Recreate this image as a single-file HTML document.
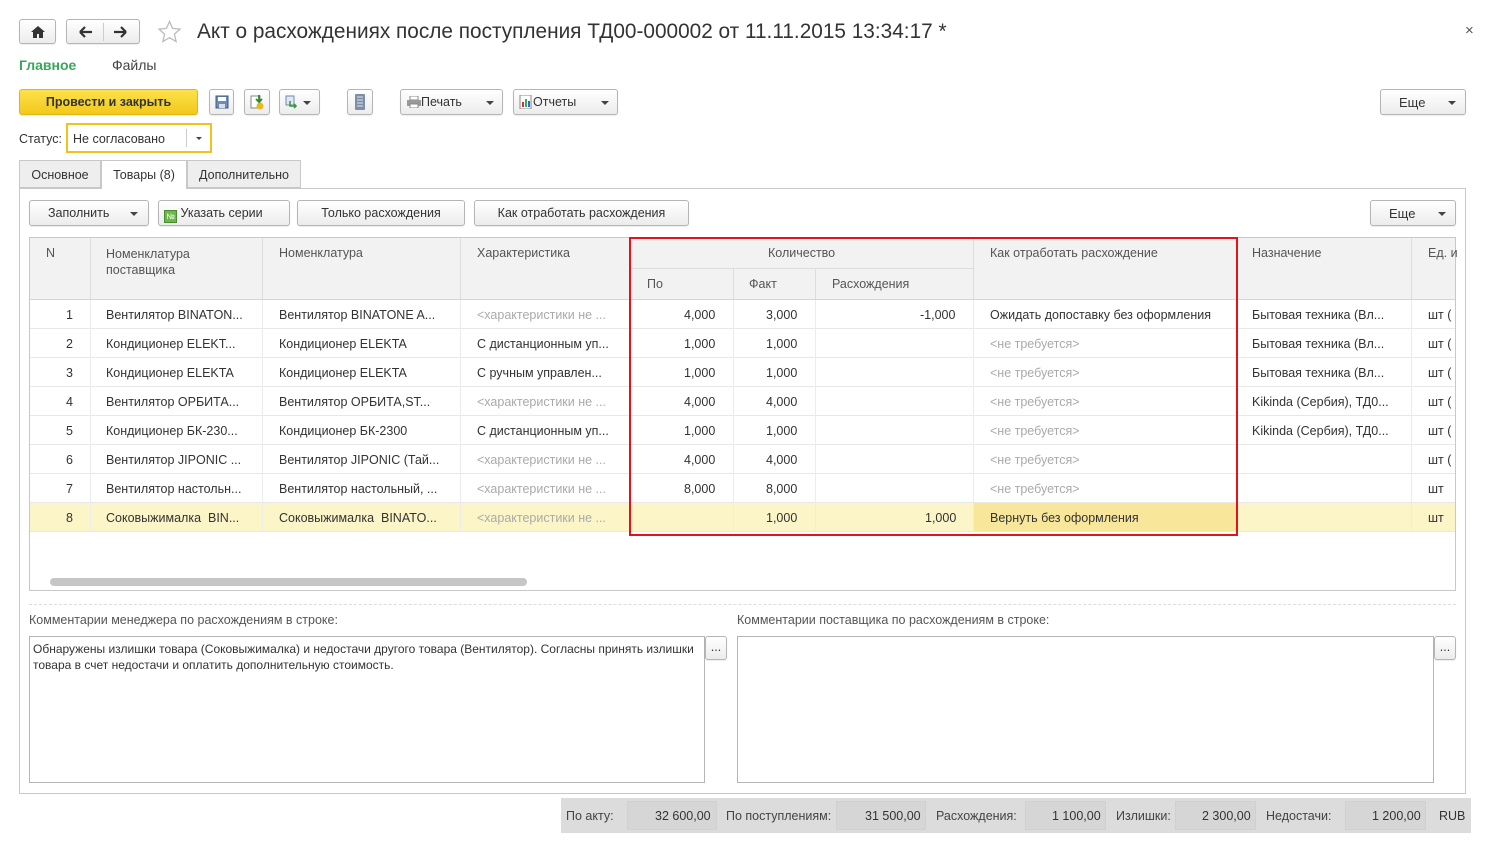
<!DOCTYPE html>
<html><head><meta charset="utf-8">
<style>
*{box-sizing:border-box;margin:0;padding:0}
body{width:1492px;height:842px;background:#fff;font-family:"Liberation Sans",Arial,sans-serif;font-size:12.5px;color:#333;position:relative;overflow:hidden}
.a{position:absolute;white-space:nowrap}
.btn{position:absolute;border:1px solid #b5b5b5;border-radius:3px;background:linear-gradient(#fff,#ececec);height:26px;line-height:25px;text-align:center;color:#333;box-shadow:0 1px 1px rgba(0,0,0,.08)}
.dd{position:absolute;width:0;height:0;border-left:4px solid transparent;border-right:4px solid transparent;border-top:4px solid #444}
.hl{position:absolute;background:#ddd}
.grey{color:#aaa}
</style></head><body>
<div class="btn" style="left:19px;top:19px;width:37px;height:25px"><svg width="14" height="12" viewBox="0 0 14 12" style="margin-top:6px"><path d="M7 0L0 6h2v6h4V8h2v4h4V6h2z" fill="#333"/></svg></div>
<div class="btn" style="left:66px;top:19px;width:74px;height:25px"><span style="position:absolute;left:36px;top:3px;height:18px;border-left:1px solid #ccc"></span><svg width="70" height="14" style="position:absolute;left:2px;top:5px"><path d="M11 7h12M11 7l5-5M11 7l5 5" stroke="#333" stroke-width="2.2" fill="none"/><path d="M57 7H45M57 7l-5-5M57 7l-5 5" stroke="#333" stroke-width="2.2" fill="none"/></svg></div>
<svg class="a" style="left:157px;top:20px" width="25" height="24" viewBox="0 0 24 24"><path d="M12 1.5l3.1 6.9 7.4.7-5.6 5 1.7 7.4L12 17.6l-6.6 3.9 1.7-7.4-5.6-5 7.4-.7z" fill="none" stroke="#bbb" stroke-width="1.3"/></svg>
<div class="a" style="left:197px;top:20px;font-size:20.8px;color:#333">Акт о расхождениях после поступления ТД00-000002 от 11.11.2015 13:34:17 *</div>
<div class="a" style="left:1465px;top:22px;font-size:15px;color:#555">×</div>
<div class="a" style="left:19px;top:57px;font-size:14px;color:#3aa55c;font-weight:bold">Главное</div>
<div class="a" style="left:112px;top:57px;font-size:14px;color:#444">Файлы</div>
<div class="btn" style="left:19px;top:89px;width:179px;background:linear-gradient(#fce24a,#f3c81c);border-color:#e0b810;font-weight:bold;color:#333">Провести и закрыть</div>
<div class="btn" style="left:209px;top:89px;width:25px"><svg width="14" height="14" style="margin-top:5px"><rect x="1" y="1" width="12" height="12" fill="#6d8db8" stroke="#3b5b88"/><rect x="3" y="2" width="8" height="4" fill="#fff"/><rect x="4" y="9" width="6" height="4" fill="#ddd"/></svg></div>
<div class="btn" style="left:244px;top:89px;width:26px"><svg width="16" height="16" style="margin-top:4px"><rect x="2" y="2" width="9" height="12" fill="#fff" stroke="#888"/><circle cx="11" cy="12" r="3.5" fill="#e8b81c"/><path d="M10 1v6M7 5l3 3 3-3" stroke="#2a8a2a" stroke-width="1.8" fill="none"/></svg></div>
<div class="btn" style="left:279px;top:89px;width:41px"><svg width="14" height="14" style="position:absolute;left:5px;top:5px"><rect x="1" y="1" width="8" height="9" fill="#dfe8f3" stroke="#6b8ab4"/><path d="M5 6v5h6M9 9l2 2-2 2" stroke="#3a9a3a" stroke-width="1.6" fill="none"/></svg><span class="dd" style="left:23px;top:11px"></span></div>
<div class="btn" style="left:347px;top:89px;width:26px"><svg width="10" height="16" style="margin-top:4px"><rect x="0" y="0" width="10" height="16" fill="#7e8ea8" rx="1"/><path d="M2 3h6M2 6h6M2 9h6M2 12h6" stroke="#dfe4ec"/></svg></div>
<div class="btn" style="left:400px;top:89px;width:103px;text-align:left;padding-left:6px"><svg width="14" height="12" style="vertical-align:-2px"><rect x="3" y="0" width="8" height="4" fill="#fff" stroke="#888"/><rect x="0" y="4" width="14" height="6" fill="#999"/><rect x="3" y="8" width="8" height="4" fill="#fff" stroke="#888"/></svg>Печать<span class="dd" style="left:85px;top:11px"></span></div>
<div class="btn" style="left:513px;top:89px;width:105px;text-align:left;padding-left:5px"><svg width="14" height="14" style="vertical-align:-3px"><rect x="1" y="0" width="11" height="14" fill="#fff" stroke="#888"/><rect x="3" y="7" width="2" height="5" fill="#c33"/><rect x="6" y="4" width="2" height="8" fill="#3a6"/><rect x="9" y="6" width="2" height="6" fill="#36c"/></svg>Отчеты<span class="dd" style="left:87px;top:11px"></span></div>
<div class="btn" style="left:1380px;top:89px;width:86px;text-align:left;padding-left:18px;font-size:13px">Еще<span class="dd" style="left:67px;top:11px"></span></div>
<div class="a" style="left:19px;top:132px">Статус:</div>
<div class="a" style="left:66px;top:123px;width:146px;height:30px;border:2px solid #f2c21b;background:#fff"><span style="position:absolute;left:5px;top:7px">Не согласовано</span><span style="position:absolute;left:118px;top:4px;height:18px;border-left:1px solid #ccc"></span><span class="dd" style="left:128px;top:12px;border-width:3px 3px 0;"></span></div>
<div class="a" style="left:19px;top:160px;width:82px;height:28px;border:1px solid #c8c8c8;background:#eee;line-height:28px;text-align:center">Основное</div>
<div class="a" style="left:101px;top:160px;width:86px;height:29px;border:1px solid #c8c8c8;border-bottom:none;background:#fff;line-height:28px;text-align:center;z-index:2">Товары (8)</div>
<div class="a" style="left:187px;top:160px;width:114px;height:28px;border:1px solid #c8c8c8;background:#eee;line-height:28px;text-align:center">Дополнительно</div>
<div class="a" style="left:19px;top:188px;width:1447px;height:606px;border:1px solid #c8c8c8"></div>
<div class="btn" style="left:29px;top:200px;width:120px;text-align:left;padding-left:18px">Заполнить<span class="dd" style="left:100px;top:11px"></span></div>
<div class="btn" style="left:158px;top:200px;width:132px;text-align:left;padding-left:5px"><span style="display:inline-block;width:13px;height:13px;background:#6bb84a;border:1px solid #4a8a30;color:#fff;font-size:8px;line-height:11px;text-align:center;vertical-align:-2px">№</span> Указать серии</div>
<div class="btn" style="left:297px;top:200px;width:168px">Только расхождения</div>
<div class="btn" style="left:474px;top:200px;width:215px">Как отработать расхождения</div>
<div class="btn" style="left:1370px;top:200px;width:86px;text-align:left;padding-left:18px;font-size:13px">Еще<span class="dd" style="left:67px;top:11px"></span></div>
<div class="a" style="left:29px;top:237px;width:1427px;height:354px;border:1px solid #c8c8c8;background:#fff;overflow:hidden">
 <div style="position:absolute;left:0;top:0;width:1427px;height:62px;background:#f2f2f2;border-bottom:1px solid #d5d5d5"></div>
</div>
<div class="hl" style="left:90px;top:238px;width:1px;height:61px"></div>
<div class="hl" style="left:262px;top:238px;width:1px;height:61px"></div>
<div class="hl" style="left:460px;top:238px;width:1px;height:61px"></div>
<div class="hl" style="left:733px;top:268px;width:1px;height:31px"></div>
<div class="hl" style="left:815px;top:268px;width:1px;height:31px"></div>
<div class="hl" style="left:973px;top:238px;width:1px;height:61px"></div>
<div class="hl" style="left:631px;top:268px;width:342px;height:1px"></div>
<div class="hl" style="left:1411px;top:238px;width:1px;height:61px"></div>
<div class="a" style="left:46px;top:246px;color:#555">N</div>
<div class="a" style="left:106px;top:246px;color:#555;line-height:16px">Номенклатура<br>поставщика</div>
<div class="a" style="left:279px;top:246px;color:#555">Номенклатура</div>
<div class="a" style="left:477px;top:246px;color:#555">Характеристика</div>
<div class="a" style="left:768px;top:246px;color:#555">Количество</div>
<div class="a" style="left:647px;top:277px;color:#555">По</div>
<div class="a" style="left:749px;top:277px;color:#555">Факт</div>
<div class="a" style="left:832px;top:277px;color:#555">Расхождения</div>
<div class="a" style="left:990px;top:246px;color:#555">Как отработать расхождение</div>
<div class="a" style="left:1252px;top:246px;color:#555">Назначение</div>
<div class="a" style="left:1428px;top:246px;color:#555">Ед. и</div>
<div class="a" style="left:30px;top:503px;width:1425px;height:29px;background:#fbf5c8"></div>
<div class="a" style="left:973px;top:503px;width:263px;height:29px;background:#f8e79a"></div>
<div class="a" style="left:30px;top:300px;width:1425px;height:233px;font-size:12.5px;color:#333">
<div style="position:relative;height:29px;border-bottom:1px solid #e8e8e8"><span class="a" style="left:36px;top:8px">1</span><span class="a" style="left:76px;top:8px">Вентилятор BINATON...</span><span class="a" style="left:249px;top:8px">Вентилятор BINATONE A...</span><span class="a grey" style="left:447px;top:8px">&lt;характеристики не ...</span><span class="a" style="left:654px;top:8px">4,000</span><span class="a" style="left:736px;top:8px">3,000</span><span class="a" style="left:890px;top:8px">-1,000</span><span class="a" style="left:960px;top:8px">Ожидать допоставку без оформления</span><span class="a" style="left:1222px;top:8px">Бытовая техника (Вл...</span><span class="a" style="left:1398px;top:8px">шт (</span></div>
<div style="position:relative;height:29px;border-bottom:1px solid #e8e8e8"><span class="a" style="left:36px;top:8px">2</span><span class="a" style="left:76px;top:8px">Кондиционер ELEKT...</span><span class="a" style="left:249px;top:8px">Кондиционер ELEKTA</span><span class="a" style="left:447px;top:8px">С дистанционным уп...</span><span class="a" style="left:654px;top:8px">1,000</span><span class="a" style="left:736px;top:8px">1,000</span><span class="a grey" style="left:960px;top:8px">&lt;не требуется&gt;</span><span class="a" style="left:1222px;top:8px">Бытовая техника (Вл...</span><span class="a" style="left:1398px;top:8px">шт (</span></div>
<div style="position:relative;height:29px;border-bottom:1px solid #e8e8e8"><span class="a" style="left:36px;top:8px">3</span><span class="a" style="left:76px;top:8px">Кондиционер ELEKTA</span><span class="a" style="left:249px;top:8px">Кондиционер ELEKTA</span><span class="a" style="left:447px;top:8px">С ручным управлен...</span><span class="a" style="left:654px;top:8px">1,000</span><span class="a" style="left:736px;top:8px">1,000</span><span class="a grey" style="left:960px;top:8px">&lt;не требуется&gt;</span><span class="a" style="left:1222px;top:8px">Бытовая техника (Вл...</span><span class="a" style="left:1398px;top:8px">шт (</span></div>
<div style="position:relative;height:29px;border-bottom:1px solid #e8e8e8"><span class="a" style="left:36px;top:8px">4</span><span class="a" style="left:76px;top:8px">Вентилятор ОРБИТА...</span><span class="a" style="left:249px;top:8px">Вентилятор ОРБИТА,ST...</span><span class="a grey" style="left:447px;top:8px">&lt;характеристики не ...</span><span class="a" style="left:654px;top:8px">4,000</span><span class="a" style="left:736px;top:8px">4,000</span><span class="a grey" style="left:960px;top:8px">&lt;не требуется&gt;</span><span class="a" style="left:1222px;top:8px">Kikinda (Сербия), ТД0...</span><span class="a" style="left:1398px;top:8px">шт (</span></div>
<div style="position:relative;height:29px;border-bottom:1px solid #e8e8e8"><span class="a" style="left:36px;top:8px">5</span><span class="a" style="left:76px;top:8px">Кондиционер БК-230...</span><span class="a" style="left:249px;top:8px">Кондиционер БК-2300</span><span class="a" style="left:447px;top:8px">С дистанционным уп...</span><span class="a" style="left:654px;top:8px">1,000</span><span class="a" style="left:736px;top:8px">1,000</span><span class="a grey" style="left:960px;top:8px">&lt;не требуется&gt;</span><span class="a" style="left:1222px;top:8px">Kikinda (Сербия), ТД0...</span><span class="a" style="left:1398px;top:8px">шт (</span></div>
<div style="position:relative;height:29px;border-bottom:1px solid #e8e8e8"><span class="a" style="left:36px;top:8px">6</span><span class="a" style="left:76px;top:8px">Вентилятор JIPONIC ...</span><span class="a" style="left:249px;top:8px">Вентилятор JIPONIC (Тай...</span><span class="a grey" style="left:447px;top:8px">&lt;характеристики не ...</span><span class="a" style="left:654px;top:8px">4,000</span><span class="a" style="left:736px;top:8px">4,000</span><span class="a grey" style="left:960px;top:8px">&lt;не требуется&gt;</span><span class="a" style="left:1398px;top:8px">шт (</span></div>
<div style="position:relative;height:29px;border-bottom:1px solid #e8e8e8"><span class="a" style="left:36px;top:8px">7</span><span class="a" style="left:76px;top:8px">Вентилятор настольн...</span><span class="a" style="left:249px;top:8px">Вентилятор настольный, ...</span><span class="a grey" style="left:447px;top:8px">&lt;характеристики не ...</span><span class="a" style="left:654px;top:8px">8,000</span><span class="a" style="left:736px;top:8px">8,000</span><span class="a grey" style="left:960px;top:8px">&lt;не требуется&gt;</span><span class="a" style="left:1398px;top:8px">шт</span></div>
<div style="position:relative;height:29px;border-bottom:1px solid #e8e8e8"><span class="a" style="left:36px;top:8px">8</span><span class="a" style="left:76px;top:8px">Соковыжималка&nbsp; BIN...</span><span class="a" style="left:249px;top:8px">Соковыжималка&nbsp; BINATO...</span><span class="a grey" style="left:447px;top:8px">&lt;характеристики не ...</span><span class="a" style="left:736px;top:8px">1,000</span><span class="a" style="left:895px;top:8px">1,000</span><span class="a" style="left:960px;top:8px">Вернуть без оформления</span><span class="a" style="left:1398px;top:8px">шт</span></div>
</div>
<div class="hl" style="left:90px;top:300px;width:1px;height:232px;background:#ececec"></div>
<div class="hl" style="left:262px;top:300px;width:1px;height:232px;background:#ececec"></div>
<div class="hl" style="left:460px;top:300px;width:1px;height:232px;background:#ececec"></div>
<div class="hl" style="left:733px;top:300px;width:1px;height:232px;background:#ececec"></div>
<div class="hl" style="left:815px;top:300px;width:1px;height:232px;background:#ececec"></div>
<div class="hl" style="left:973px;top:300px;width:1px;height:232px;background:#ececec"></div>
<div class="hl" style="left:1411px;top:300px;width:1px;height:232px;background:#ececec"></div>
<div class="a" style="left:629px;top:237px;width:609px;height:299px;border:2px solid #e0151b"></div>
<div class="a" style="left:50px;top:578px;width:477px;height:8px;background:#c6c6c6;border-radius:4px"></div>
<div class="a" style="left:29px;top:604px;width:1427px;border-top:1px dashed #ddd"></div>
<div class="a" style="left:29px;top:613px;color:#555">Комментарии менеджера по расхождениям в строке:</div>
<div class="a" style="left:737px;top:613px;color:#555">Комментарии поставщика по расхождениям в строке:</div>
<div class="a" style="left:29px;top:636px;width:676px;height:147px;border:1px solid #b5b5b5;padding:4px 3px;white-space:normal;font-size:12px;line-height:16px;color:#333">Обнаружены излишки товара (Соковыжималка) и недостачи другого товара (Вентилятор). Согласны принять излишки товара в счет недостачи и оплатить дополнительную стоимость.</div>
<div class="btn" style="left:705px;top:636px;width:22px;height:24px;line-height:20px">...</div>
<div class="a" style="left:737px;top:636px;width:697px;height:147px;border:1px solid #b5b5b5"></div>
<div class="btn" style="left:1434px;top:636px;width:22px;height:24px;line-height:20px">...</div>
<div class="a" style="left:561px;top:798px;width:910px;height:35px;background:#dcdcdc"></div>
<div class="a" style="left:627px;top:801px;width:90px;height:29px;background:#d6d6d6;border:1px solid #d0d0d0"></div>
<div class="a" style="left:836px;top:801px;width:90px;height:29px;background:#d6d6d6;border:1px solid #d0d0d0"></div>
<div class="a" style="left:1025px;top:801px;width:81px;height:29px;background:#d6d6d6;border:1px solid #d0d0d0"></div>
<div class="a" style="left:1175px;top:801px;width:81px;height:29px;background:#d6d6d6;border:1px solid #d0d0d0"></div>
<div class="a" style="left:1345px;top:801px;width:81px;height:29px;background:#d6d6d6;border:1px solid #d0d0d0"></div>
<div class="a" style="left:566px;top:809px;color:#444">По акту:</div>
<div class="a" style="left:655px;top:809px;color:#333">32 600,00</div>
<div class="a" style="left:726px;top:809px;color:#444">По поступлениям:</div>
<div class="a" style="left:865px;top:809px;color:#333">31 500,00</div>
<div class="a" style="left:936px;top:809px;color:#444">Расхождения:</div>
<div class="a" style="left:1052px;top:809px;color:#333">1 100,00</div>
<div class="a" style="left:1116px;top:809px;color:#444">Излишки:</div>
<div class="a" style="left:1202px;top:809px;color:#333">2 300,00</div>
<div class="a" style="left:1266px;top:809px;color:#444">Недостачи:</div>
<div class="a" style="left:1372px;top:809px;color:#333">1 200,00</div>
<div class="a" style="left:1439px;top:809px;color:#333">RUB</div>
</body></html>
